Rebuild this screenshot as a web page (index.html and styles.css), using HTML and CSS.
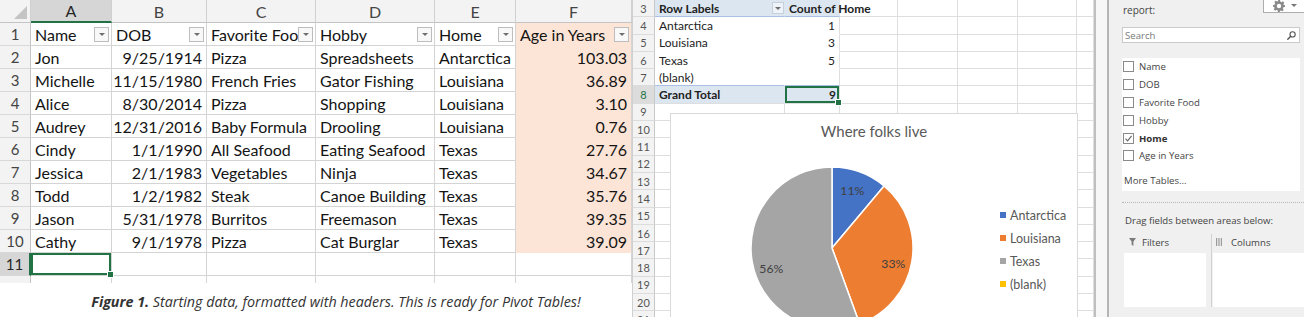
FILE: index.html
```html
<!DOCTYPE html>
<html lang="en">
<head>
<meta charset="utf-8">
<title>Pivot table example</title>
<link rel="stylesheet" href="styles.css">
</head>
<body>
<div class="page">
  <section class="sheet">
    <div class="grid">
      <div class="c h corner"><i class="tri"></i></div>
      <div class="c h sel">A</div><div class="c h">B</div><div class="c h">C</div><div class="c h">D</div><div class="c h">E</div><div class="c h">F</div>

      <div class="c rh">1</div>
      <div class="c th"><span class="t">Name</span><i class="dd"></i></div>
      <div class="c th"><span class="t">DOB</span><i class="dd"></i></div>
      <div class="c th"><span class="t">Favorite Food</span><i class="dd"></i></div>
      <div class="c th"><span class="t">Hobby</span><i class="dd"></i></div>
      <div class="c th"><span class="t">Home</span><i class="dd"></i></div>
      <div class="c th pe"><span class="t">Age in Years</span><i class="dd"></i></div>

      <div class="c rh">2</div><div class="c">Jon</div><div class="c n">9/25/1914</div><div class="c">Pizza</div><div class="c">Spreadsheets</div><div class="c">Antarctica</div><div class="c n pe">103.03</div>
      <div class="c rh">3</div><div class="c">Michelle</div><div class="c n">11/15/1980</div><div class="c">French Fries</div><div class="c">Gator Fishing</div><div class="c">Louisiana</div><div class="c n pe">36.89</div>
      <div class="c rh">4</div><div class="c">Alice</div><div class="c n">8/30/2014</div><div class="c">Pizza</div><div class="c">Shopping</div><div class="c">Louisiana</div><div class="c n pe">3.10</div>
      <div class="c rh">5</div><div class="c">Audrey</div><div class="c n">12/31/2016</div><div class="c">Baby Formula</div><div class="c">Drooling</div><div class="c">Louisiana</div><div class="c n pe">0.76</div>
      <div class="c rh">6</div><div class="c">Cindy</div><div class="c n">1/1/1990</div><div class="c">All Seafood</div><div class="c">Eating Seafood</div><div class="c">Texas</div><div class="c n pe">27.76</div>
      <div class="c rh">7</div><div class="c">Jessica</div><div class="c n">2/1/1983</div><div class="c">Vegetables</div><div class="c">Ninja</div><div class="c">Texas</div><div class="c n pe">34.67</div>
      <div class="c rh">8</div><div class="c">Todd</div><div class="c n">1/2/1982</div><div class="c">Steak</div><div class="c">Canoe Building</div><div class="c">Texas</div><div class="c n pe">35.76</div>
      <div class="c rh">9</div><div class="c">Jason</div><div class="c n">5/31/1978</div><div class="c">Burritos</div><div class="c">Freemason</div><div class="c">Texas</div><div class="c n pe">39.35</div>
      <div class="c rh">10</div><div class="c">Cathy</div><div class="c n">9/1/1978</div><div class="c">Pizza</div><div class="c">Cat Burglar</div><div class="c">Texas</div><div class="c n pe">39.09</div>
      <div class="c rh sel">11</div><div class="c cur"><i class="handle"></i></div><div class="c"></div><div class="c"></div><div class="c"></div><div class="c"></div><div class="c"></div>
      <div class="c rh stub"></div><div class="c stub"></div><div class="c stub"></div><div class="c stub"></div><div class="c stub"></div><div class="c stub"></div><div class="c stub"></div>
    </div>
    <p class="caption"><b>Figure 1.</b> Starting data, formatted with headers. This is ready for Pivot Tables!</p>
  </section>

  <section class="sheet2">
    <div class="mgrid">
      <div class="m mr">3</div><div class="m pvh pa"><span class="t">Row Labels</span><i class="dd sm"></i></div><div class="m pvh ov">Count of Home</div><div class="m"></div><div class="m"></div><div class="m"></div><div class="m"></div><div class="m"></div>
      <div class="m mr">4</div><div class="m pv pa">Antarctica</div><div class="m pv n">1</div><div class="m"></div><div class="m"></div><div class="m"></div><div class="m"></div><div class="m"></div>
      <div class="m mr">5</div><div class="m pv pa">Louisiana</div><div class="m pv n">3</div><div class="m"></div><div class="m"></div><div class="m"></div><div class="m"></div><div class="m"></div>
      <div class="m mr">6</div><div class="m pv pa">Texas</div><div class="m pv n">5</div><div class="m"></div><div class="m"></div><div class="m"></div><div class="m"></div><div class="m"></div>
      <div class="m mr">7</div><div class="m pv pa last">(blank)</div><div class="m pv n last"></div><div class="m"></div><div class="m"></div><div class="m"></div><div class="m"></div><div class="m"></div>
      <div class="m mr sel">8</div><div class="m pvt">Grand Total</div><div class="m pvt n cur">9<i class="handle"></i></div><div class="m"></div><div class="m"></div><div class="m"></div><div class="m"></div><div class="m"></div>
      <div class="m mr">9</div><div class="m"></div><div class="m"></div><div class="m"></div><div class="m"></div><div class="m"></div><div class="m"></div><div class="m"></div>
      <div class="m mr">10</div><div class="m"></div><div class="m"></div><div class="m"></div><div class="m"></div><div class="m"></div><div class="m"></div><div class="m"></div>
      <div class="m mr">11</div><div class="m"></div><div class="m"></div><div class="m"></div><div class="m"></div><div class="m"></div><div class="m"></div><div class="m"></div>
      <div class="m mr">12</div><div class="m"></div><div class="m"></div><div class="m"></div><div class="m"></div><div class="m"></div><div class="m"></div><div class="m"></div>
      <div class="m mr">13</div><div class="m"></div><div class="m"></div><div class="m"></div><div class="m"></div><div class="m"></div><div class="m"></div><div class="m"></div>
      <div class="m mr">14</div><div class="m"></div><div class="m"></div><div class="m"></div><div class="m"></div><div class="m"></div><div class="m"></div><div class="m"></div>
      <div class="m mr">15</div><div class="m"></div><div class="m"></div><div class="m"></div><div class="m"></div><div class="m"></div><div class="m"></div><div class="m"></div>
      <div class="m mr">16</div><div class="m"></div><div class="m"></div><div class="m"></div><div class="m"></div><div class="m"></div><div class="m"></div><div class="m"></div>
      <div class="m mr">17</div><div class="m"></div><div class="m"></div><div class="m"></div><div class="m"></div><div class="m"></div><div class="m"></div><div class="m"></div>
      <div class="m mr">18</div><div class="m"></div><div class="m"></div><div class="m"></div><div class="m"></div><div class="m"></div><div class="m"></div><div class="m"></div>
      <div class="m mr">19</div><div class="m"></div><div class="m"></div><div class="m"></div><div class="m"></div><div class="m"></div><div class="m"></div><div class="m"></div>
      <div class="m mr">20</div><div class="m"></div><div class="m"></div><div class="m"></div><div class="m"></div><div class="m"></div><div class="m"></div><div class="m"></div>
      <div class="m mr">21</div><div class="m"></div><div class="m"></div><div class="m"></div><div class="m"></div><div class="m"></div><div class="m"></div><div class="m"></div>
    </div>

    <div class="chart">
      <div class="chart-title">Where folks live</div>
      <div class="chart-body">
        <svg class="pie" width="170" height="170" viewBox="0 0 170 170">
          <path d="M85 85 L85 4 A81 81 0 0 1 137.07 22.95 Z" fill="#4472c4" stroke="#fff" stroke-width="1.5"/>
          <path d="M85 85 L137.07 22.95 A81 81 0 0 1 112.70 161.12 Z" fill="#ed7d31" stroke="#fff" stroke-width="1.5"/>
          <path d="M85 85 L112.70 161.12 A81 81 0 1 1 85 4 Z" fill="#a5a5a5" stroke="#fff" stroke-width="1.5"/>
          <text x="105.3" y="27" class="pl">11%</text>
          <text x="146.3" y="100" class="pl">33%</text>
          <text x="24.3" y="105" class="pl">56%</text>
        </svg>
        <ul class="legend">
          <li><i class="sw blue"></i>Antarctica</li>
          <li><i class="sw orange"></i>Louisiana</li>
          <li><i class="sw grey"></i>Texas</li>
          <li><i class="sw yellow"></i>(blank)</li>
        </ul>
      </div>
    </div>
  </section>

  <div class="strip"></div>

  <aside class="pane">
    <div class="pane-head">
      <span class="report">report:</span>
      <span class="gear-btn">
        <svg width="12" height="12" viewBox="0 0 12 12"><path d="M5 0h2l.3 1.6 1.2.6 1.4-.9 1.4 1.4-.9 1.4.6 1.2L12 5v2l-1.6.3-.6 1.2.9 1.4-1.4 1.4-1.4-.9-1.2.6L7 12H5l-.3-1.6-1.2-.6-1.4.9-1.4-1.4.9-1.4-.6-1.2L0 7V5l1.6-.3.6-1.2-.9-1.4 1.4-1.4 1.4.9 1.2-.6Z M6 3.8A2.2 2.2 0 1 0 6 8.2 2.2 2.2 0 1 0 6 3.8Z" fill="#8a8a8a" fill-rule="evenodd"/></svg>
        <i class="caret"></i>
      </span>
    </div>
    <div class="search">
      <span>Search</span>
      <svg width="9" height="9" viewBox="0 0 9 9"><circle cx="5.6" cy="3.4" r="2.6" fill="none" stroke="#555" stroke-width="1.1"/><path d="M3.7 5.3 L0.8 8.2" stroke="#555" stroke-width="1.4" stroke-linecap="round"/></svg>
    </div>
    <div class="fields">
      <div class="field"><span class="cb"></span>Name</div>
      <div class="field"><span class="cb"></span>DOB</div>
      <div class="field"><span class="cb"></span>Favorite Food</div>
      <div class="field"><span class="cb"></span>Hobby</div>
      <div class="field on"><span class="cb"><svg width="9" height="9" viewBox="0 0 9 9"><path d="M1.5 4.6 L3.6 6.8 L7.6 1.8" fill="none" stroke="#666" stroke-width="1.1"/></svg></span>Home</div>
      <div class="field"><span class="cb"></span>Age in Years</div>
      <div class="more">More Tables...</div>
    </div>
    <div class="sep"></div>
    <div class="drag">Drag fields between areas below:</div>
    <div class="areas">
      <div class="area left">
        <div class="area-h"><svg width="7" height="8" viewBox="0 0 7 8"><path d="M0 0H7L4.4 3.4V8L2.6 6.8V3.4Z" fill="#7a7a7a"/></svg>Filters</div>
        <div class="area-box"></div>
      </div>
      <div class="area right">
        <div class="area-h"><svg width="6" height="8" viewBox="0 0 6 8"><rect x="0" y="0" width="1.2" height="8" fill="#9a9a9a"/><rect x="2.4" y="0" width="1.2" height="8" fill="#9a9a9a"/><rect x="4.8" y="0" width="1.2" height="8" fill="#9a9a9a"/></svg>Columns</div>
        <div class="area-box"></div>
      </div>
    </div>
  </aside>
</div>
</body>
</html>
```

FILE: styles.css
```css
* { box-sizing: border-box; }
html, body { margin: 0; padding: 0; overflow: hidden; }
body {
  width: 1304px;
  height: 317px;
  background: #fff;
  font-family: Lato, "Liberation Sans", sans-serif;
}
.page { display: flex; height: 317px; overflow: hidden; }

/* ---------- left sheet ---------- */
.sheet { width: 632px; flex: none; }
.grid {
  display: grid;
  grid-template-columns: 31px 81px 95px 109px 119px 81px 116px;
  grid-template-rows: repeat(12, 23px) 7px;
  font-size: 16px;
  color: #141414;
}
.c {
  border-right: 1px solid #d4d4d4;
  border-bottom: 1px solid #d4d4d4;
  display: flex;
  align-items: center;
  padding: 0 4px;
  white-space: nowrap;
  overflow: hidden;
  min-width: 0;
}
.c.n { justify-content: flex-end; }
.c.h {
  background: #f3f3f3;
  border-right-color: #d0d0d0;
  border-bottom-color: #c4c4c4;
  justify-content: center;
  color: #444;
}
.c.h.sel {
  background: #d6d6d6;
  color: #262626;
  border-bottom: 2px solid #217346;
}
.c.corner { justify-content: flex-end; align-items: flex-end; padding: 3px; }
.tri {
  width: 0; height: 0;
  border-left: 13px solid transparent;
  border-bottom: 13px solid #c4c4c4;
}
.c.rh {
  background: #f3f3f3;
  border-right-color: #c4c4c4;
  border-bottom-color: #d8d8d8;
  justify-content: center;
  color: #444;
  font-size: 15px;
  padding: 0;
}
.c.rh.sel { background: #d6d6d6; color: #262626; border-right: 2px solid #217346; }
.c.th { padding-right: 2px; }
.t { flex: 1; min-width: 0; overflow: hidden; white-space: nowrap; }
.dd {
  flex: none;
  width: 15px;
  height: 15px;
  border: 1px solid #bdbdbd;
  background: #f8f8f8;
  display: flex;
  align-items: center;
  justify-content: center;
}
.dd::after {
  content: "";
  border-left: 3px solid transparent;
  border-right: 3px solid transparent;
  border-top: 3px solid #6e6e6e;
}
.c.pe { background: #fce4d6; border-bottom-color: #fce4d6; }
.c.cur { position: relative; overflow: visible; box-shadow: inset 0 0 0 2px #217346; }
.handle {
  position: absolute;
  right: -3px;
  bottom: -3px;
  width: 5px;
  height: 5px;
  background: #217346;
  border: 1px solid #fff;
  box-sizing: content-box;
  z-index: 2;
}
.c.stub { border-bottom: none; }
.caption {
  margin: 0;
  padding: 10px 0 0 40px;
  text-align: center;
  font-family: "Open Sans", sans-serif;
  font-style: italic;
  font-size: 14.3px;
  line-height: 18px;
  color: #333;
}
.caption b { font-weight: 700; }

/* ---------- middle sheet ---------- */
.sheet2 { position: relative; width: 462px; flex: none; overflow: hidden; border-left: 1px solid #d0d0d0; }
.mgrid {
  display: grid;
  grid-template-columns: 22px 130px 55px 58px 60px 60px 59px 17px;
  grid-auto-rows: 17.3px;
  font-size: 12px;
  color: #222;
}
.m {
  border-right: 1px solid #dedede;
  border-bottom: 1px solid #dedede;
  display: flex;
  align-items: center;
  padding: 0 4px;
  white-space: nowrap;
  min-width: 0;
}
.m.n { justify-content: flex-end; }
.m.mr {
  background: #f3f3f3;
  border-right-color: #c8c8c8;
  border-bottom-color: #dcdcdc;
  justify-content: center;
  color: #555;
  font-size: 11px;
  padding: 0;
}
.m.mr.sel { background: #dcdcdc; color: #217346; }
.m.pvh {
  background: #dce6f1;
  font-weight: 700;
  border-bottom-color: #a9c0e0;
  padding-right: 0;
}
.m.pvh.ov { overflow: visible; border-right-color: transparent; position: relative; z-index: 1; }
.m.pv { border-bottom-color: transparent; }
.m.pa { border-right-color: transparent; }
.m.pv.last { border-bottom-color: #a9c0e0; }
.m.pvt { background: #dce6f1; font-weight: 700; border-right-color: transparent; }
.m.pvt.cur {
  position: relative;
  box-shadow: inset 0 0 0 2px #217346;
  border-right-color: #dedede;
  padding-right: 3px;
}
.dd.sm { width: 12px; height: 12px; margin-right: 0; background: #eef3f9; border-color: #c7cfda; }

.chart {
  position: absolute;
  left: 37px;
  top: 113px;
  width: 408px;
  height: 230px;
  background: #fff;
  border: 1px solid #d9d9d9;
  z-index: 3;
}
.chart-title {
  margin-top: 8px;
  text-align: center;
  font-size: 15px;
  line-height: 18px;
  color: #595959;
}
.chart-body { display: flex; align-items: flex-start; }
.pie { flex: none; margin-left: 75.7px; margin-top: 23px; }
.pl { font-family: Lato, sans-serif; font-size: 12.2px; fill: #404040; text-anchor: middle; dominant-baseline: central; }
.legend {
  list-style: none;
  margin: 63.5px 0 0 83.3px;
  padding: 0;
  font-size: 12.5px;
  color: #595959;
}
.legend li { display: flex; align-items: center; height: 23px; }
.sw { width: 6px; height: 6px; margin-right: 4px; flex: none; }
.sw.blue { background: #4472c4; }
.sw.orange { background: #ed7d31; }
.sw.grey { background: #a5a5a5; }
.sw.yellow { background: #ffc000; }

.strip {
  width: 15px;
  flex: none;
  background: #f7f7f7;
  border-left: 2px solid #bfbfbf;
  border-right: 2px solid #b5b5b5;
}

/* ---------- field list pane ---------- */
.pane {
  flex: 1;
  background: #f0f0f0;
  padding-left: 13px;
  font-family: "Open Sans", sans-serif;
  font-size: 9.6px;
  color: #444;
}
.pane-head { display: flex; justify-content: space-between; align-items: flex-start; height: 27px; }
.report { font-size: 10px; line-height: 20px; padding-left: 1px; }
.gear-btn {
  width: 41px;
  height: 21px;
  margin-top: -8px;
  background: #fff;
  border: 1px solid #adadad;
  border-right: none;
  display: flex;
  align-items: center;
  padding-left: 9px;
  gap: 6px;
}
.gear-btn svg { margin-top: 6px; }
.caret {
  margin-top: 6px;
  border-left: 3px solid transparent;
  border-right: 3px solid transparent;
  border-top: 3px solid #777;
}
.search {
  width: 178px;
  height: 16px;
  background: #fff;
  border: 1px solid #cacaca;
  display: flex;
  align-items: center;
  justify-content: space-between;
  padding: 0 3px 0 2px;
  color: #7a7a7a;
}
.fields {
  width: 178px;
  height: 133px;
  margin-top: 15px;
  background: #fff;
}
.field { display: flex; align-items: center; height: 17.8px; padding-left: 1px; }
.cb {
  width: 11px;
  height: 11px;
  border: 1px solid #8a8a8a;
  background: #fff;
  margin-right: 5px;
  display: flex;
  align-items: center;
  justify-content: center;
  flex: none;
}
.field.on { font-weight: 700; color: #333; }
.more { margin-top: 7px; line-height: 17.8px; padding-left: 2px; }
.sep { margin-top: 11px; border-top: 1px dotted #b8b8b8; }
.drag { margin-top: 10px; line-height: 16px; padding-left: 3px; }
.areas { display: grid; grid-template-columns: 88px 1fr; margin-top: 5px; margin-left: 2px; }
.area.left { border-right: 1px solid #d2d2d2; }
.area-h { display: flex; align-items: center; gap: 6px; height: 19px; padding-bottom: 3px; padding-left: 5px; }
.area.right .area-h { padding-left: 4px; gap: 9px; }
.area-box { height: 54px; background: #fff; border-bottom: 1px solid #fff; }
.area.left .area-box { width: 82px; }
.area.right .area-box { margin-left: 1px; }
```
